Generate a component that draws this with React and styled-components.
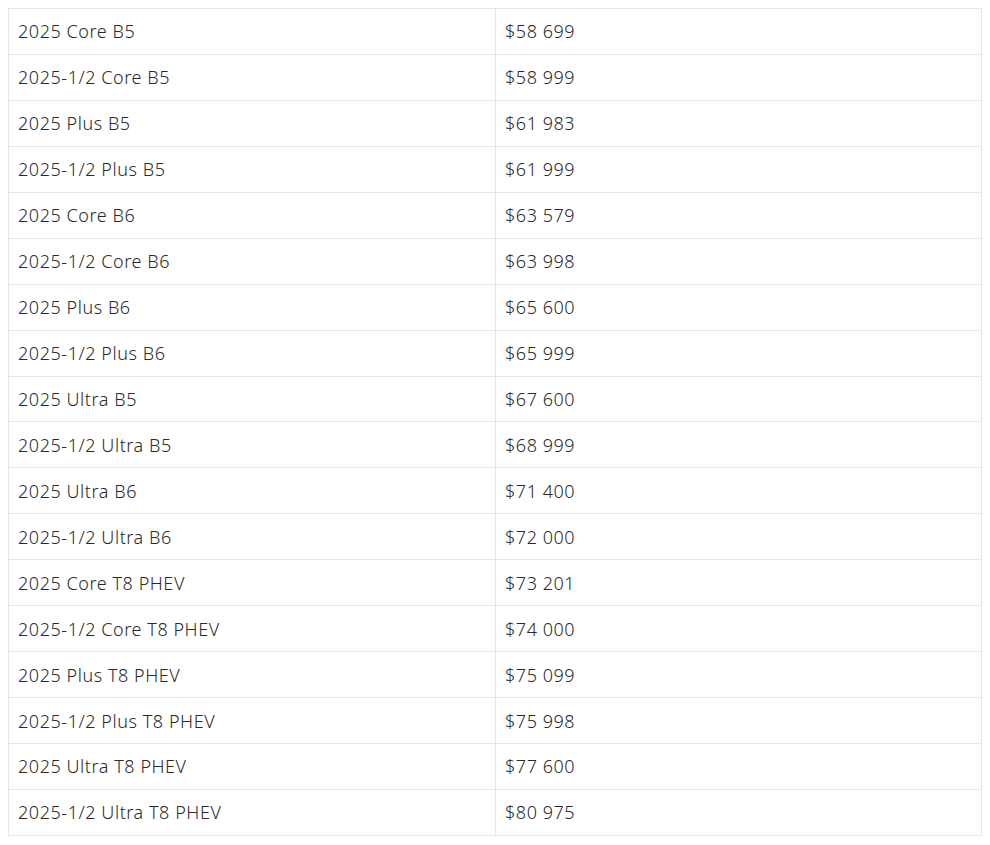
import React from 'react';
import styled, { createGlobalStyle } from 'styled-components';

const GlobalStyle = createGlobalStyle`
  body {
    margin: 8px;
    background: #fff;
    font-family: "Noto Sans", "Open Sans", sans-serif;
  }
`;

const Table = styled.table`
  width: 974px;
  border-collapse: collapse;
  table-layout: fixed;
  color: #2a2a2a;
  font-size: 18px;
  font-weight: 300;
`;

const Row = styled.tr`
  height: 45.94px;
`;

const Cell = styled.td`
  padding: 0 10px 0 9px;
  border: 1px solid #e6e6e6;
  width: ${({ wide }) => (wide ? 'auto' : '467px')};
  vertical-align: middle;
  letter-spacing: 0.55px;
`;

const rows = [
  ['2025 Core B5', '$58 699'],
  ['2025-1/2 Core B5', '$58 999'],
  ['2025 Plus B5', '$61 983'],
  ['2025-1/2 Plus B5', '$61 999'],
  ['2025 Core B6', '$63 579'],
  ['2025-1/2 Core B6', '$63 998'],
  ['2025 Plus B6', '$65 600'],
  ['2025-1/2 Plus B6', '$65 999'],
  ['2025 Ultra B5', '$67 600'],
  ['2025-1/2 Ultra B5', '$68 999'],
  ['2025 Ultra B6', '$71 400'],
  ['2025-1/2 Ultra B6', '$72 000'],
  ['2025 Core T8 PHEV', '$73 201'],
  ['2025-1/2 Core T8 PHEV', '$74 000'],
  ['2025 Plus T8 PHEV', '$75 099'],
  ['2025-1/2 Plus T8 PHEV', '$75 998'],
  ['2025 Ultra T8 PHEV', '$77 600'],
  ['2025-1/2 Ultra T8 PHEV', '$80 975'],
];

export default function App() {
  return (
    <>
      <GlobalStyle />
      <Table>
        <tbody>
          {rows.map(([trim, price]) => (
            <Row key={trim}>
              <Cell>{trim}</Cell>
              <Cell wide>{price}</Cell>
            </Row>
          ))}
        </tbody>
      </Table>
    </>
  );
}
